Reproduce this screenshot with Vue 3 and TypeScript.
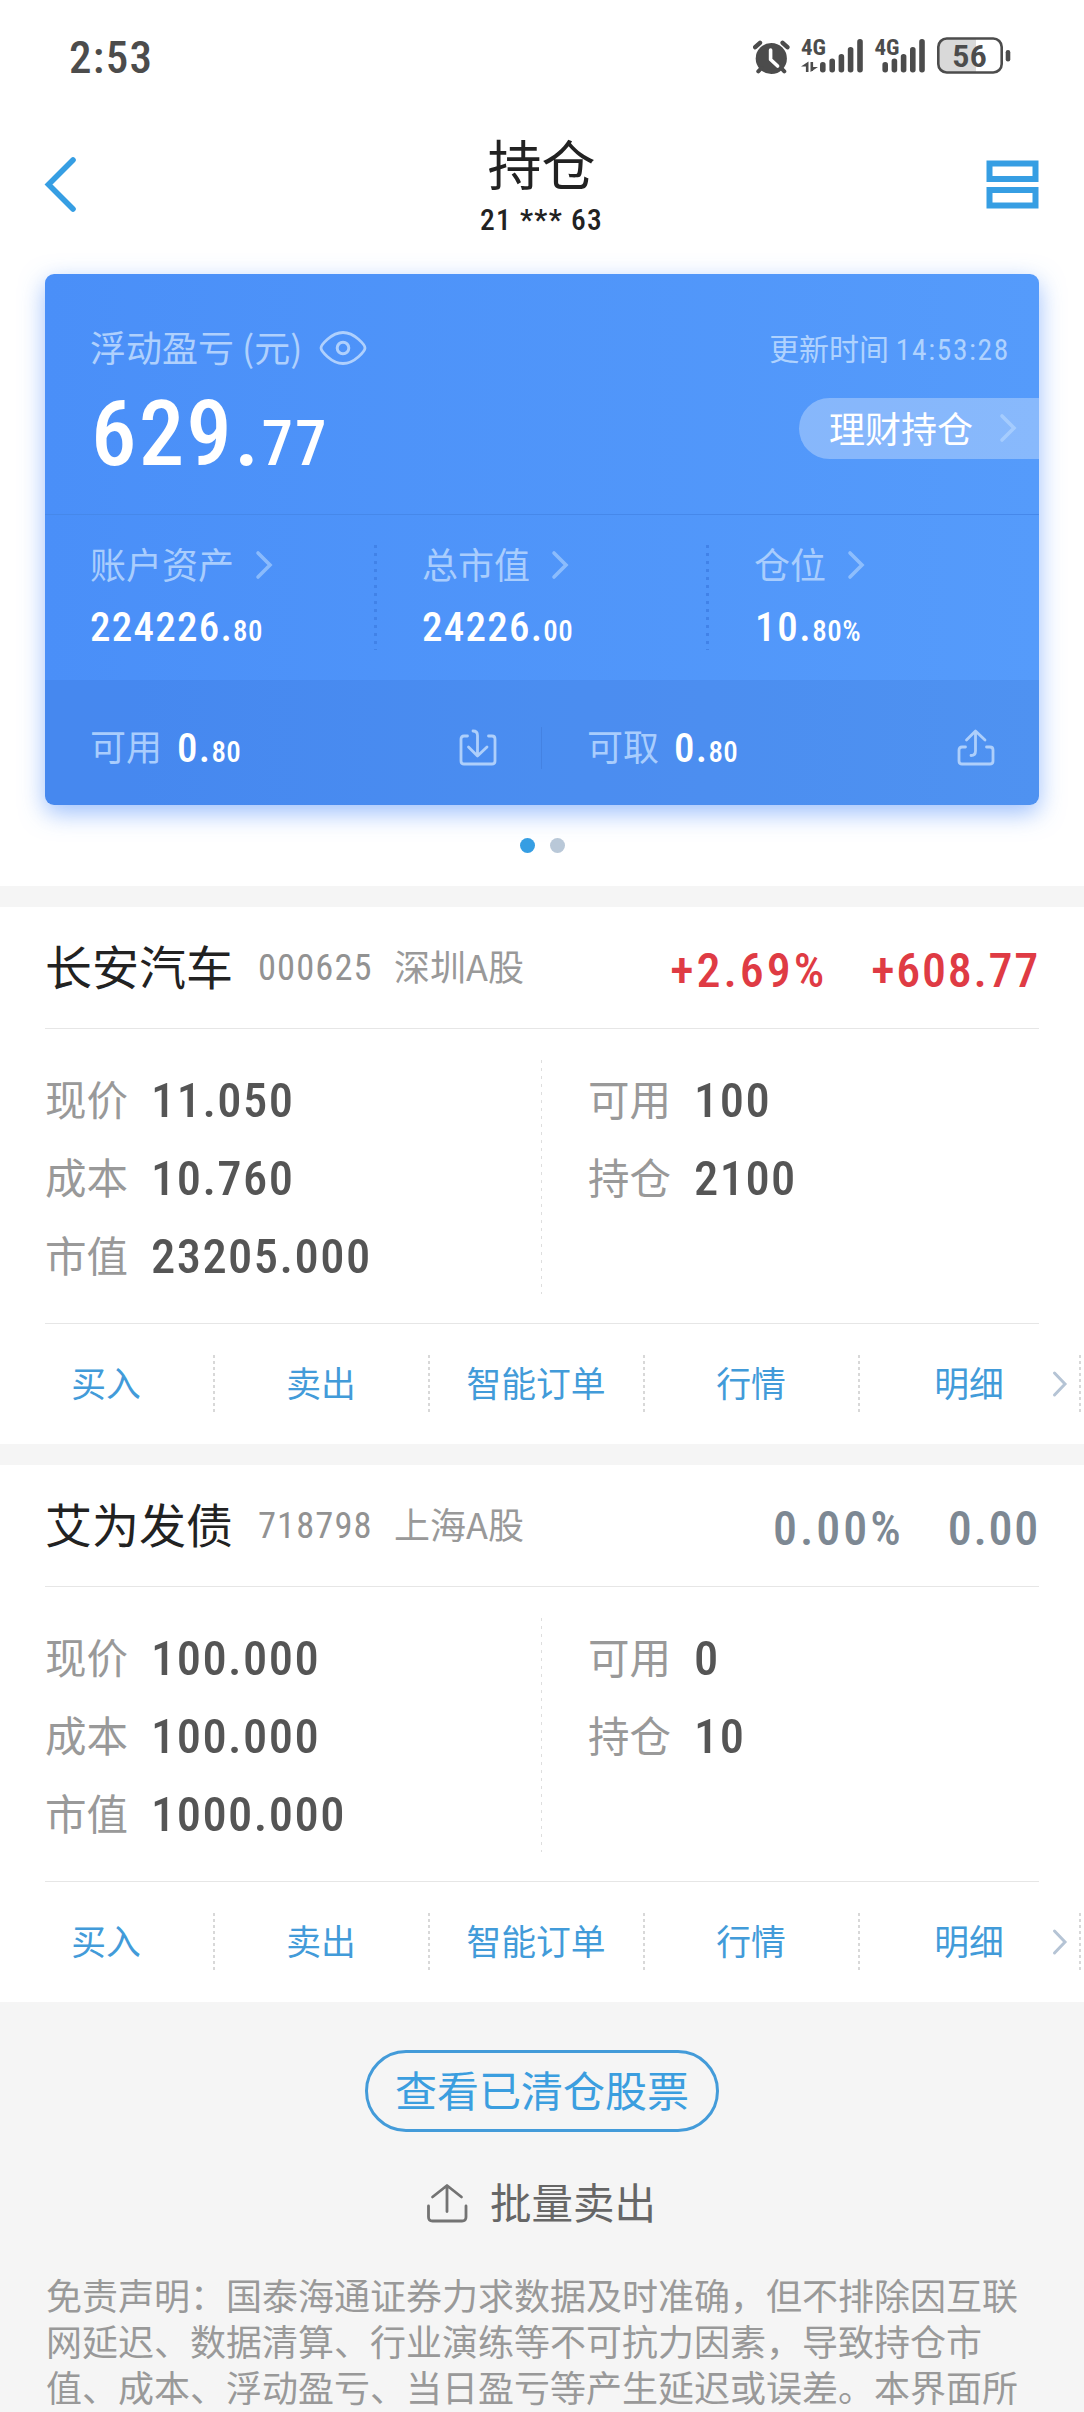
<script setup lang="ts">
interface Metric {
  label: string
  int: string
  dec: string
}

interface Field {
  label: string
  value: string
}

interface Holding {
  name: string
  code: string
  market: string
  percent: string
  profit: string
  up: boolean
  left: Field[]
  right: Field[]
}

const metrics: Metric[] = [
  { label: '账户资产', int: '224226.', dec: '80' },
  { label: '总市值', int: '24226.', dec: '00' },
  { label: '仓位', int: '10.', dec: '80%' },
]

const holdings: Holding[] = [
  {
    name: '长安汽车',
    code: '000625',
    market: '深圳A股',
    percent: '+2.69%',
    profit: '+608.77',
    up: true,
    left: [
      { label: '现价', value: '11.050' },
      { label: '成本', value: '10.760' },
      { label: '市值', value: '23205.000' },
    ],
    right: [
      { label: '可用', value: '100' },
      { label: '持仓', value: '2100' },
    ],
  },
  {
    name: '艾为发债',
    code: '718798',
    market: '上海A股',
    percent: '0.00%',
    profit: '0.00',
    up: false,
    left: [
      { label: '现价', value: '100.000' },
      { label: '成本', value: '100.000' },
      { label: '市值', value: '1000.000' },
    ],
    right: [
      { label: '可用', value: '0' },
      { label: '持仓', value: '10' },
    ],
  },
]

const actions: string[] = ['买入', '卖出', '智能订单', '行情', '明细']
</script>

<template>
  <div class="page">
    <div class="status">
      <span class="num clock">2:53</span>
      <svg class="status-icons" width="258" height="40" viewBox="0 0 258 40" fill="#4c4c4c">
        <!-- alarm clock -->
        <g>
          <circle cx="18.3" cy="21.5" r="15.6" />
          <path d="M2.2 10.2 7 5.8M34.4 10.2 29.6 5.8" stroke="#4c4c4c" stroke-width="4.4" stroke-linecap="round" />
          <path d="M8.5 31 5.3 34.4M28.1 31 31.3 34.4" stroke="#4c4c4c" stroke-width="4" stroke-linecap="round" />
          <path d="M17.6 13V22.5L24.6 29" fill="none" stroke="#fff" stroke-width="3.6" stroke-linecap="round" stroke-linejoin="round" />
        </g>
        <!-- first sim -->
        <text x="48" y="18.2" class="net" textLength="25" lengthAdjust="spacingAndGlyphs">4G</text>
        <path d="M48 29.5H55.500V24.500ZM52.900 26V35H55.500V26ZM57.500 25H60.100V34H57.500ZM57.500 35V30H65Z" />
        <g>
          <rect x="67" y="25" width="5.6" height="10.4" rx="2.7" />
          <rect x="76.4" y="21.4" width="5.6" height="14" rx="2.7" />
          <rect x="85.6" y="17" width="5.6" height="18.4" rx="2.7" />
          <rect x="94.8" y="10" width="5.6" height="25.4" rx="2.7" />
          <rect x="104.2" y="2" width="5.6" height="33.4" rx="2.7" />
        </g>
        <!-- second sim -->
        <text x="121.5" y="18.2" class="net" textLength="25" lengthAdjust="spacingAndGlyphs">4G</text>
        <g>
          <rect x="129.4" y="25" width="5.6" height="10.4" rx="2.7" />
          <rect x="138.6" y="21.4" width="5.6" height="14" rx="2.7" />
          <rect x="147.8" y="17" width="5.6" height="18.4" rx="2.7" />
          <rect x="157" y="10" width="5.6" height="25.4" rx="2.7" />
          <rect x="166.2" y="2" width="5.6" height="33.4" rx="2.7" />
        </g>
        <!-- battery -->
        <path d="M192 1.5H223V35.5H192Q185.300 35.5 185.300 28V9Q185.300 1.500 192 1.500Z" fill="#d9d9d9" />
        <rect x="185.300" y="1.500" width="63.400" height="34" rx="8.500" fill="none" stroke="#4c4c4c" stroke-width="2.600" />
        <rect x="252.700" y="13" width="4.600" height="11.500" rx="2.200" />
        <text x="199" y="29.800" class="level" textLength="35" lengthAdjust="spacingAndGlyphs">56</text>
      </svg>
    </div>

    <header class="header">
      <svg width="34" height="60" viewBox="0 0 34 60" fill="none" stroke="#369ee3" stroke-width="5.6" stroke-linecap="round">
        <path d="M30 5 5.500 29.500 30 54" />
      </svg>
      <div class="title">
        <h1>持仓</h1>
        <span class="num">21 *** 63</span>
      </div>
      <svg width="53" height="49" viewBox="0 0 53 49" fill="none" stroke="#369ee3" stroke-width="6">
        <rect x="3.500" y="3.500" width="46" height="15.500" />
        <rect x="3.500" y="30" width="46" height="15.500" />
      </svg>
    </header>

    <section class="card">
      <div class="summary">
        <div>
          <div class="summary-label">
            浮动盈亏 (元)
            <svg width="48" height="36" viewBox="0 0 48 36" fill="none" stroke="currentColor" stroke-width="2.800">
              <path d="M2 18C2 15.500 12 2.500 24 2.500S46 15.500 46 18 36 33.500 24 33.500 2 20.500 2 18Z" stroke-linejoin="round" />
              <circle cx="24" cy="18" r="5.800" stroke-width="3" />
            </svg>
          </div>
          <div class="num total">629.<small>77</small></div>
        </div>
        <div class="summary-side">
          <div class="updated">更新时间 <span class="num">14:53:28</span></div>
          <div class="pill">
            理财持仓
            <svg class="chev" width="18" height="30" viewBox="0 0 18 30"><path d="M3 3 15 15 3 27" /></svg>
          </div>
        </div>
      </div>

      <div class="metrics">
        <div v-for="m in metrics" :key="m.label" class="metric">
          <div class="metric-label">
            {{ m.label }}
            <svg class="chev" width="18" height="30" viewBox="0 0 18 30"><path d="M3 3 15 15 3 27" /></svg>
          </div>
          <div class="num metric-value">{{ m.int }}<small>{{ m.dec }}</small></div>
        </div>
      </div>

      <div class="funds">
        <div class="fund">
          <span class="fund-label">可用</span>
          <span class="num metric-value">0.<small>80</small></span>
          <svg width="38" height="38" viewBox="0 0 38 38" class="fund-icon">
            <path d="M8.500 7H5Q2 7 2 10V32Q2 35 5 35H33Q36 35 36 32V10Q36 7 33 7H29.500" />
            <path d="M14 2Q18.500 2 18.500 6.500V26.500M9.500 18 18.500 27 28 18" />
          </svg>
        </div>
        <div class="fund-divider"></div>
        <div class="fund">
          <span class="fund-label">可取</span>
          <span class="num metric-value">0.<small>80</small></span>
          <svg width="38" height="38" viewBox="0 0 38 38" class="fund-icon">
            <path d="M8.500 18H5Q2 18 2 21V32Q2 35 5 35H33Q36 35 36 32V21Q36 18 33 18H29.500" />
            <path d="M14 26.500Q18.500 26.500 18.500 22V2.500M9.500 11 18.500 2 28 11" />
          </svg>
        </div>
      </div>
    </section>

    <div class="dots"><i class="on"></i><i></i></div>

    <section v-for="h in holdings" :key="h.code" class="holding">
      <div class="holding-head">
        <span class="name">{{ h.name }}</span>
        <span class="num code">{{ h.code }}</span>
        <span class="market">{{ h.market }}</span>
        <span class="num gain" :class="{ up: h.up }">
          <span class="percent">{{ h.percent }}</span><span>{{ h.profit }}</span>
        </span>
      </div>
      <div class="fields">
        <div class="column">
          <div v-for="f in h.left" :key="f.label" class="field">
            <span>{{ f.label }}</span><b class="num">{{ f.value }}</b>
          </div>
        </div>
        <div class="column second">
          <div v-for="f in h.right" :key="f.label" class="field">
            <span>{{ f.label }}</span><b class="num">{{ f.value }}</b>
          </div>
        </div>
      </div>
      <div class="actions">
        <div v-for="a in actions" :key="a" class="action">
          <span>{{ a }}</span>
        </div>
        <svg class="more" width="16" height="28" viewBox="0 0 16 28"><path d="M2.500 3 13 14 2.500 25" /></svg>
      </div>
    </section>

    <footer class="footer">
      <button class="cleared">查看已清仓股票</button>
      <div class="batch">
        <svg width="42" height="40" viewBox="0 0 42 40" fill="none" stroke="#737373" stroke-width="2.800" stroke-linecap="round">
          <path d="M2.500 23V34Q2.500 38 6.500 38H36Q40 38 40 34V23" />
          <path d="M21 28.500V3M6.500 14 21 2.500 35.500 14" stroke-linejoin="round" />
        </svg>
        批量卖出
      </div>
      <p class="disclaimer">免责声明：国泰海通证券力求数据及时准确，但不排除因互联网延迟、数据清算、行业演练等不可抗力因素，导致持仓市值、成本、浮动盈亏、当日盈亏等产生延迟或误差。本界面所</p>
    </footer>
  </div>
</template>

<style>
body {
  margin: 0;
  background: #fff;
}
</style>

<style scoped>
.page {
  width: 1084px;
  height: 2412px;
  overflow: hidden;
  background: #fff;
  color: #222;
  font-family: "Noto Sans CJK SC", sans-serif;
  text-spacing-trim: space-all;
}
.page * {
  box-sizing: border-box;
}
svg {
  display: block;
  flex: none;
}
.num {
  font-family: "Roboto Condensed", Roboto, sans-serif;
  font-weight: 500;
  letter-spacing: 0.03em;
}

.status {
  display: flex;
  align-items: center;
  justify-content: space-between;
  height: 114px;
  padding: 2px 73px 0 69px;
}
.status-icons {
  margin-top: -2px;
}
.clock {
  color: #4c4c4c;
  font-size: 45px;
  line-height: 50px;
}
.net {
  font: 700 22px "Roboto Condensed", Roboto, sans-serif;
}
.level {
  font: 600 31px "Roboto Condensed", Roboto, sans-serif;
}

.header {
  display: flex;
  align-items: center;
  justify-content: space-between;
  height: 141px;
  margin-bottom: 19px;
  padding: 0 45px 0 43px;
}
.title {
  display: flex;
  flex-direction: column;
  align-items: center;
  gap: 15px;
  padding: 2px 0 0 20px;
}
.title h1 {
  margin: 0;
  font-size: 54px;
  font-weight: 400;
  line-height: 54px;
}
.title span {
  font-size: 29.5px;
  line-height: 30px;
  letter-spacing: 0.043em;
}

.card {
  width: 994px;
  height: 531px;
  margin-left: 45px;
  overflow: hidden;
  border-radius: 9px;
  background: linear-gradient(90deg, #4a8ff8, #559bfb);
  box-shadow: 0 8px 24px rgba(74, 138, 250, 0.55);
  color: #fff;
}
.summary {
  display: flex;
  justify-content: space-between;
  height: 241px;
  padding-left: 45px;
  border-bottom: 1px solid #4688ea;
}
.summary-label {
  display: flex;
  align-items: center;
  gap: 17px;
  margin-top: 47px;
  color: #afd0fd;
  font-size: 36px;
  line-height: 50px;
}
.summary-label svg {
  margin-top: 4px;
}
.total {
  margin: 17px 0 0 1px;
  font-size: 91px;
  line-height: 92px;
  letter-spacing: 0.024em;
}
.total small {
  font-size: 63px;
  letter-spacing: 0.03em;
}
.summary-side {
  display: flex;
  flex-direction: column;
  align-items: flex-end;
  padding-top: 53px;
}
.updated {
  padding-right: 29px;
  color: #afd2fe;
  font-size: 30px;
  line-height: 40px;
}
.updated .num {
  font-size: 29.5px;
  font-weight: 400;
  letter-spacing: 0.055em;
}
.pill {
  display: flex;
  align-items: center;
  justify-content: space-between;
  width: 240px;
  height: 61px;
  margin-top: 28px;
  padding: 0 22px 4px 30px;
  border-radius: 31px 0 0 31px;
  background: rgba(255, 255, 255, 0.3);
  font-size: 36px;
}
.pill .chev {
  margin-top: 3px;
}
.chev {
  fill: none;
  stroke: rgba(190, 220, 255, 0.55);
  stroke-width: 3.6;
  stroke-linecap: round;
}

.metrics {
  display: flex;
  height: 165px;
}
.metric {
  width: 332px;
  padding: 28px 0 0 45px;
  background: repeating-linear-gradient(180deg, #4182e8 0 3px, transparent 3px 8px) 329px 30px / 3px 105px no-repeat;
}
.metric:last-child {
  width: 330px;
  background: none;
}
.metric:last-child .num {
  padding-left: 1px;
  letter-spacing: 0.04em;
}
.metric-label {
  display: flex;
  align-items: center;
  gap: 21px;
  color: #a9cdfd;
  font-size: 36px;
  line-height: 40px;
}
.metric-label .chev {
  margin-top: 3px;
}
.metric-value {
  font-size: 41px;
  line-height: 50px;
}
.metric .metric-value {
  margin-top: 19px;
}
.metric-value small {
  font-size: 29px;
  letter-spacing: 0.015em;
}

.funds {
  display: flex;
  align-items: center;
  height: 125px;
  padding-top: 10px;
  background: rgba(50, 100, 190, 0.16);
}
.fund {
  display: flex;
  align-items: center;
  width: 496px;
  padding: 0 44px 0 45px;
}
.fund .num {
  margin-top: 4px;
}
.fund:last-child {
  padding-right: 43px;
}
.fund-label {
  width: 87px;
  margin-top: -6px;
  color: #a9cdfd;
  font-size: 36px;
  line-height: 50px;
}
.fund-divider {
  width: 1px;
  height: 42px;
  background: #4482e2;
}
.fund-icon {
  margin-left: auto;
  fill: none;
  stroke: #aecffb;
  stroke-width: 2.8;
  stroke-linecap: round;
  stroke-linejoin: round;
}

.dots {
  display: flex;
  justify-content: center;
  gap: 15px;
  height: 81px;
  padding: 33px 0 0;
}
.dots i {
  width: 15px;
  height: 15px;
  border-radius: 50%;
  background: #b9c8d8;
}
.dots .on {
  background: #369ee3;
}

.holding {
  height: 558px;
  border-top: 21px solid #f5f5f5;
  background: #fff;
}
.holding-head {
  display: flex;
  align-items: center;
  height: 122px;
  margin: 0 45px;
  border-bottom: 1px solid #e6e6e6;
}
.name {
  width: 213px;
  margin-top: -6px;
  font-size: 47px;
  line-height: 60px;
  white-space: nowrap;
}
.code {
  width: 136px;
  color: #929292;
  font-size: 36.5px;
  font-weight: 400;
  letter-spacing: 0.03em;
}
.market {
  margin-top: -6px;
  color: #999;
  font-size: 36px;
  line-height: 50px;
}
.gain {
  display: flex;
  gap: 44px;
  margin: 6px -1px 0 auto;
  color: #7d8893;
  font-size: 48px;
  letter-spacing: 0.036em;
}
.percent {
  letter-spacing: 0.062em;
}
.gain.up {
  color: #df3b44;
}

.fields {
  display: flex;
  height: 295px;
  margin: 0 45px;
  padding-top: 32px;
  border-bottom: 1px solid #e6e6e6;
  background: repeating-linear-gradient(180deg, #dedede 0 3px, transparent 3px 8px) 496px 31px / 1px 234px no-repeat;
}
.column {
  width: 543px;
}
.column.second {
  width: 450px;
}
.field {
  display: flex;
  align-items: center;
  height: 78px;
  color: #999;
  font-size: 41.5px;
}
.field span {
  width: 106px;
  margin-top: -5px;
  line-height: 60px;
}
.field b {
  color: #555;
  font-size: 48.5px;
}

.actions {
  display: flex;
  align-items: flex-start;
  width: 1084px;
  padding-top: 31px;
}
.action {
  display: flex;
  justify-content: center;
  width: 215px;
  height: 57px;
  padding-right: 3px;
  background: repeating-linear-gradient(180deg, #d8d8d8 0 3px, transparent 3px 6px) right top / 2px 57px no-repeat;
  color: #429bd9;
  font-size: 34.8px;
  line-height: 54px;
}
.action:nth-child(5) {
  width: 221px;
  margin-right: -29px;
}
.more {
  margin-top: 15px;
  fill: none;
  stroke: #b5c4d5;
  stroke-width: 3;
  stroke-linecap: round;
}

.footer {
  display: flex;
  flex-direction: column;
  align-items: center;
  height: 410px;
  padding-top: 48px;
  background: #f5f5f5;
}
.cleared {
  width: 354px;
  height: 82px;
  padding: 0 0 5px;
  border: 3px solid #439bd9;
  border-radius: 41px;
  background: transparent;
  color: #3b9edf;
  font-family: inherit;
  font-size: 42px;
  line-height: 70px;
}
.batch {
  display: flex;
  align-items: center;
  gap: 22px;
  height: 60px;
  margin-top: 39px;
  padding-right: 2px;
  color: #666;
  font-size: 41.5px;
  line-height: 56px;
}
.batch svg {
  margin-top: 3px;
}
.disclaimer {
  width: 992px;
  margin: 40px 0 0;
  padding-right: 1px;
  color: #999;
  font-size: 36px;
  line-height: 46px;
}
</style>
